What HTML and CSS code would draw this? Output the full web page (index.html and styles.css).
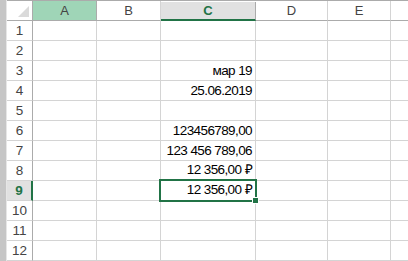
FILE: index.html
```html
<!DOCTYPE html>
<html lang="ru">
<head>
    <meta charset="UTF-8">
    <title>Лист1</title>
    <link rel="stylesheet" href="styles.css">
</head>
<body>

<div class="edge"></div>
<div class="sheet">
    <div class="topbar">
        <div class="topbar-green"></div>
        <div class="topbar-rest"></div>
    </div>
    <div class="grid">
        <div class="corner"><span class="corner-tri"></span></div>
        <div class="col-head hover">A</div>
        <div class="col-head">B</div>
        <div class="col-head active">C</div>
        <div class="col-head">D</div>
        <div class="col-head">E</div>
        <div class="col-head last"></div>

        <div class="row-head">1</div><div class="cell"></div><div class="cell"></div><div class="cell"></div><div class="cell"></div><div class="cell"></div><div class="cell last"></div>
        <div class="row-head">2</div><div class="cell"></div><div class="cell"></div><div class="cell"></div><div class="cell"></div><div class="cell"></div><div class="cell last"></div>
        <div class="row-head">3</div><div class="cell"></div><div class="cell"></div><div class="cell num">мар 19</div><div class="cell"></div><div class="cell"></div><div class="cell last"></div>
        <div class="row-head">4</div><div class="cell"></div><div class="cell"></div><div class="cell num">25.06.2019</div><div class="cell"></div><div class="cell"></div><div class="cell last"></div>
        <div class="row-head">5</div><div class="cell"></div><div class="cell"></div><div class="cell"></div><div class="cell"></div><div class="cell"></div><div class="cell last"></div>
        <div class="row-head">6</div><div class="cell"></div><div class="cell"></div><div class="cell num">123456789,00</div><div class="cell"></div><div class="cell"></div><div class="cell last"></div>
        <div class="row-head">7</div><div class="cell"></div><div class="cell"></div><div class="cell num">123 456 789,06</div><div class="cell"></div><div class="cell"></div><div class="cell last"></div>
        <div class="row-head">8</div><div class="cell"></div><div class="cell"></div><div class="cell num">12 356,00 ₽</div><div class="cell"></div><div class="cell"></div><div class="cell last"></div>
        <div class="row-head active">9</div><div class="cell"></div><div class="cell"></div><div class="cell num selected">12 356,00 ₽</div><div class="cell"></div><div class="cell"></div><div class="cell last"></div>
        <div class="row-head">10</div><div class="cell"></div><div class="cell"></div><div class="cell"></div><div class="cell"></div><div class="cell"></div><div class="cell last"></div>
        <div class="row-head">11</div><div class="cell"></div><div class="cell"></div><div class="cell"></div><div class="cell"></div><div class="cell"></div><div class="cell last"></div>
        <div class="row-head">12</div><div class="cell"></div><div class="cell"></div><div class="cell"></div><div class="cell"></div><div class="cell"></div><div class="cell last"></div>
    </div>
</div>

</body>
</html>
```

FILE: styles.css
```css
body {
    margin: 0;
    display: flex;
    height: 261px;
    overflow: hidden;
    background-color: white;
    font-family: "Liberation Sans", Arial, sans-serif;
}
.edge {
    width: 6px;
    flex-shrink: 0;
    background-color: #c6c6c6;
    border-right: 1px solid #e6e6e6;
}
.sheet {
    flex: 1;
    display: flex;
    flex-direction: column;
}
.topbar {
    display: flex;
    height: 2px;
    border-bottom: 1px solid #ababab;
}
.topbar-green {
    width: 319px;
    background-color: #e3f1e8;
}
.topbar-rest {
    flex: 1;
    background-color: white;
}
.grid {
    display: grid;
    grid-template-columns: 26px 64px 64px 95px 72px 63px 1fr;
    grid-template-rows: 20px repeat(12, 20px);
}
.corner {
    position: relative;
    border-right: 1px solid #ababab;
    border-bottom: 1px solid #ababab;
}
.corner-tri {
    position: absolute;
    right: 3px;
    bottom: 3px;
    width: 0;
    height: 0;
    border-left: 11px solid transparent;
    border-bottom: 11px solid #dadada;
}
.col-head {
    display: flex;
    align-items: center;
    justify-content: center;
    font-size: 13px;
    color: #444;
    border-right: 1px solid #d4d4d4;
    border-bottom: 1px solid #ababab;
}
.col-head.hover {
    background-color: #9fd5b7;
    border-right-color: #ababab;
}
.col-head.active {
    background-color: #e1e1e1;
    color: #217346;
    font-weight: bold;
    border-bottom: 2px solid #217346;
    border-right-color: #ababab;
    margin-top: 1px;
}
.col-head.last {
    border-right: none;
}
.row-head {
    display: flex;
    align-items: center;
    justify-content: center;
    font-size: 13.5px;
    color: #444;
    border-right: 1px solid #ababab;
    border-bottom: 1px solid #d4d4d4;
}
.row-head.active {
    background-color: #e1e1e1;
    color: #217346;
    font-weight: bold;
    border-right: 2px solid #217346;
}
.cell {
    border-right: 1px solid #d4d4d4;
    border-bottom: 1px solid #d4d4d4;
    font-size: 13.5px;
    color: #000;
}
.cell.last {
    border-right: none;
}
.num {
    display: flex;
    align-items: flex-end;
    justify-content: flex-end;
    padding-right: 3px;
    padding-bottom: 2px;
    letter-spacing: -0.6px;
    white-space: nowrap;
}
.selected {
    position: relative;
}
.selected::after {
    content: "";
    position: absolute;
    left: -2px;
    top: -2px;
    right: -2px;
    bottom: -2px;
    border: 2px solid #217346;
}
.selected::before {
    content: "";
    position: absolute;
    right: -4px;
    bottom: -4px;
    width: 5px;
    height: 5px;
    background-color: #217346;
    border: 1px solid white;
    z-index: 1;
}
```
